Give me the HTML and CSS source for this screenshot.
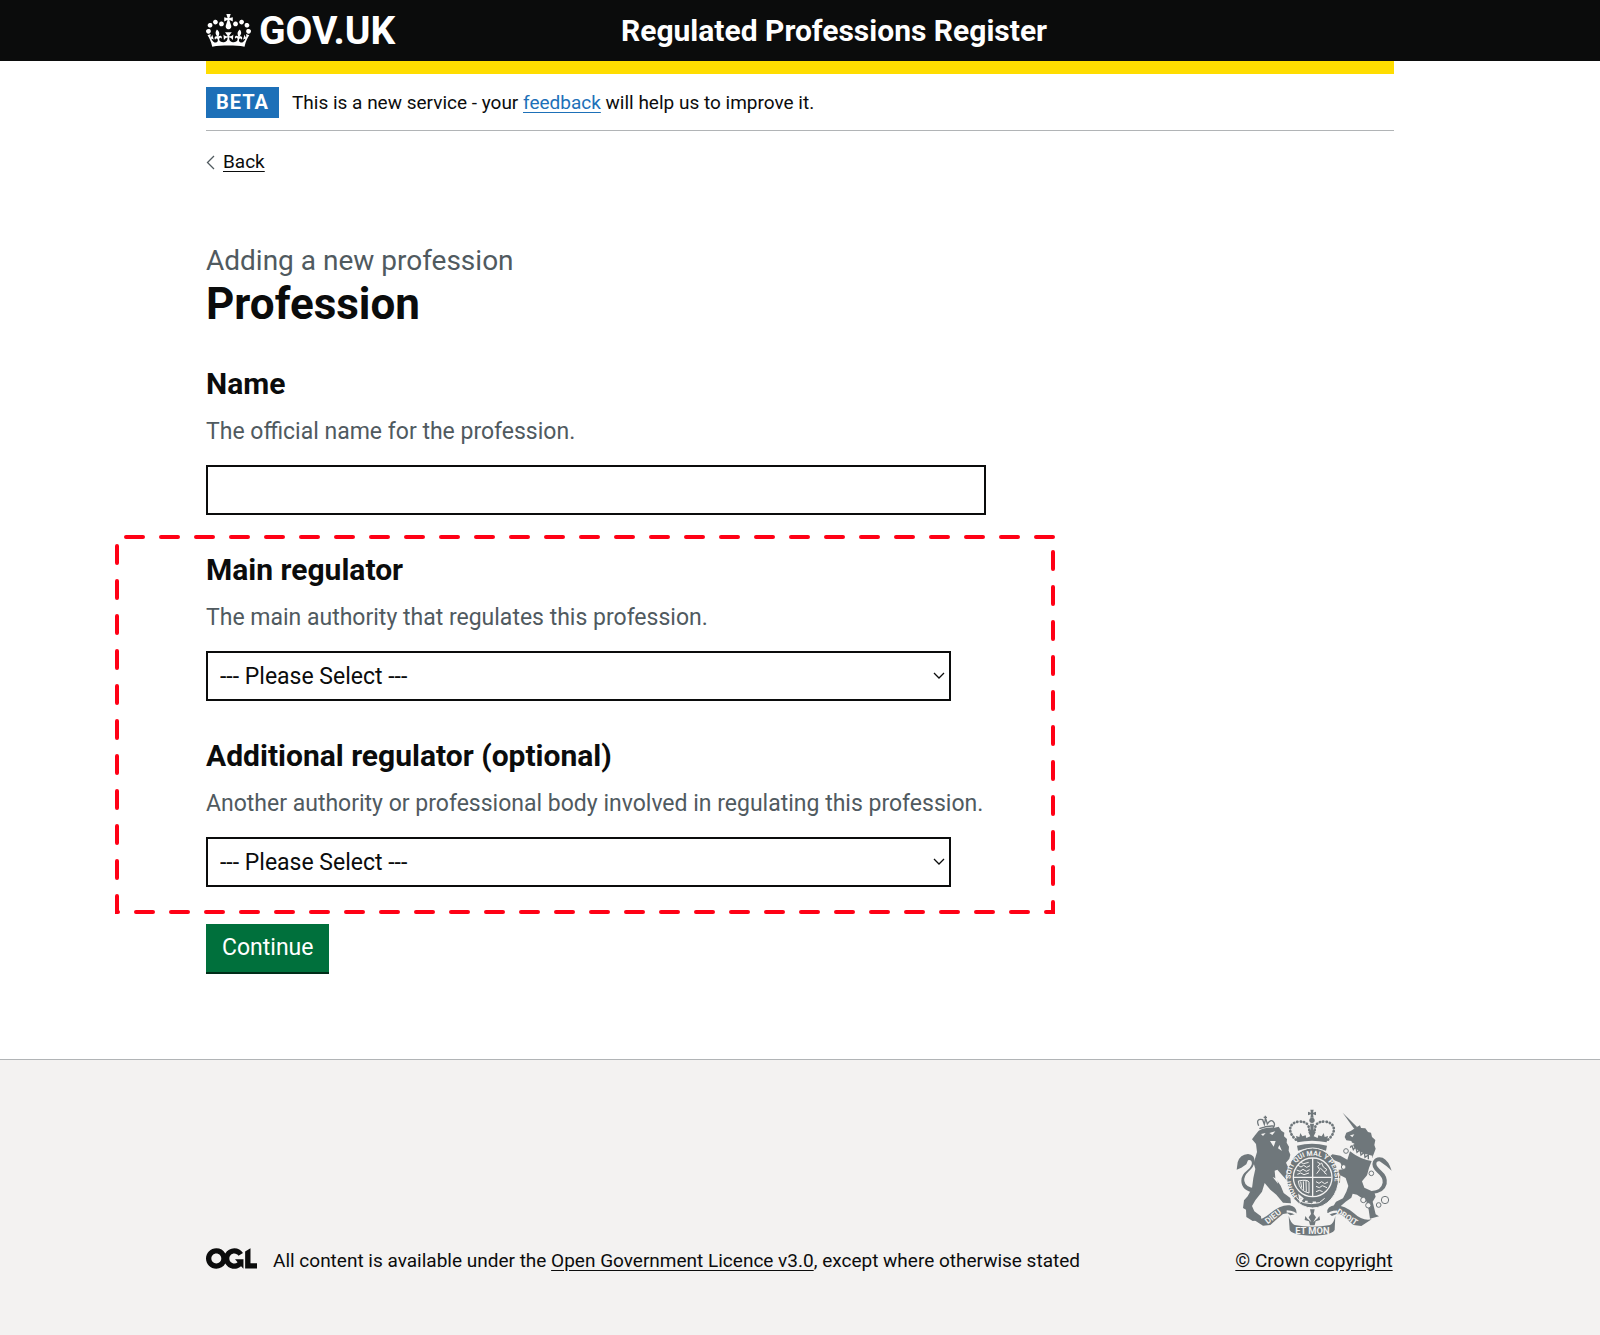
FILE: index.html
```html
<!DOCTYPE html>
<html lang="en">
<head>
<meta charset="utf-8">
<meta name="viewport" content="width=device-width, initial-scale=1">
<title>Profession - Regulated Professions Register</title>
<link rel="stylesheet" href="styles.css">
</head>
<body>
<header class="header">
  <div class="container header-inner">
    <a class="logo" href="#">
      <svg class="logo-crown" viewBox="0 0 132 97" aria-hidden="true"><path fill="currentColor" fill-rule="evenodd" d="M25 30.2c3.5 1.5 7.7-.2 9.1-3.7 1.5-3.6-.2-7.8-3.9-9.2-3.6-1.4-7.6.3-9.1 3.9-1.4 3.5.3 7.5 3.9 9zM9 39.5c3.6 1.5 7.8-.2 9.2-3.7 1.5-3.6-.2-7.8-3.9-9.1-3.6-1.5-7.6.2-9.1 3.8-1.4 3.5.3 7.5 3.8 9zM4.4 57.2c3.5 1.5 7.7-.2 9.1-3.8 1.5-3.6-.2-7.7-3.9-9.1-3.5-1.5-7.6.3-9.1 3.8-1.4 3.5.3 7.6 3.9 9.1zm38.3-21.4c3.5 1.5 7.7-.2 9.1-3.8 1.5-3.6-.2-7.7-3.9-9.1-3.6-1.5-7.6.3-9.1 3.8-1.3 3.6.4 7.7 3.9 9.1zm64.4-5.6c-3.6 1.5-7.8-.2-9.1-3.7-1.5-3.6.2-7.8 3.8-9.2 3.6-1.4 7.7.3 9.2 3.9 1.3 3.5-.4 7.5-3.9 9zm15.9 9.3c-3.6 1.5-7.7-.2-9.1-3.7-1.5-3.6.2-7.8 3.7-9.1 3.6-1.5 7.7.2 9.2 3.8 1.5 3.5-.3 7.5-3.8 9zm4.7 17.7c-3.6 1.5-7.8-.2-9.2-3.8-1.5-3.6.2-7.7 3.9-9.1 3.6-1.5 7.7.3 9.2 3.8 1.3 3.5-.4 7.6-3.9 9.1zM89.3 35.8c-3.6 1.5-7.8-.2-9.2-3.8-1.4-3.6.2-7.7 3.9-9.1 3.6-1.5 7.7.3 9.2 3.8 1.4 3.6-.3 7.7-3.9 9.1zM69.7 17.7l8.9 4.7V9.3l-8.9 2.8c-.2-.3-.5-.6-.9-.9L72.4 0H59.6l3.5 11.2c-.3.3-.6.5-.9.9l-8.8-2.8v13.1l8.8-4.7c.3.3.6.7.9.9l-5 15.4v.1c-.2.8-.4 1.6-.4 2.4 0 4.1 3.1 7.5 7 8.1h.2c.3 0 .7.1 1 .1.4 0 .7 0 1-.1h.2c4-.6 7.1-4.1 7.1-8.1 0-.8-.1-1.7-.4-2.4V34l-5.1-15.4c.4-.2.7-.6 1-.9zM66 92.8c16.9 0 32.8 1.1 47.1 3.2 4-16.9 8.9-26.7 14-33.5l-9.6-3.4c1 4.9 1.1 7.2 0 10.2-1.5-1.4-3-4.3-4.2-8.7L108.6 76c2.8-2 5-3.2 7.5-3.3-4.4 9.4-10 11.9-13.6 11.2-4.3-.8-6.3-4.6-5.6-7.9 1-4.7 5.7-5.9 8-.5 4.3-8.7-3-11.4-7.6-8.8 7.1-7.2 7.9-13.5 2.1-21.1-8 6.1-8.1 12.3-4.5 20.8-4.7-5.4-12.1-2.5-9.5 6.2 3.4-5.2 7.9-2 7.2 3.1-.6 4.3-6.4 7.8-13.5 7.2-10.3-.9-10.9-8-11.2-13.8 2.5-.5 7.1 1.8 11 7.3L80.2 60c-4.1 4.4-8 5.3-12.3 5.4 1.4-4.4 8-11.6 8-11.6H55.5s6.4 7.2 7.9 11.6c-4.2-.1-8-1-12.3-5.4l1.4 16.4c3.9-5.5 8.5-7.7 10.9-7.3-.3 5.8-.9 12.8-11.1 13.8-7.2.6-12.9-2.9-13.5-7.2-.7-5 3.8-8.3 7.1-3.1 2.7-8.7-4.6-11.6-9.4-6.2 3.7-8.5 3.6-14.7-4.6-20.8-5.8 7.6-5 13.9 2.2 21.1-4.7-2.6-11.9.1-7.7 8.8 2.3-5.5 7.1-4.2 8.1.5.7 3.3-1.3 7.1-5.7 7.9-3.5.7-9-1.8-13.5-11.2 2.5.1 4.7 1.3 7.5 3.3l-4.7-15.4c-1.2 4.4-2.7 7.2-4.3 8.7-1.1-3-.9-5.3 0-10.2l-9.5 3.4c5 6.9 9.9 16.7 14 33.5 14.8-2.1 30.8-3.2 47.7-3.2z"/></svg>
      <span>GOV.UK</span>
    </a>
    <a class="service-name" href="#">Regulated Professions Register</a>
  </div>
</header>

<div class="container">
  <div class="phase-banner">
    <strong class="tag">BETA</strong>
    <span>This is a new service - your <a class="link" href="#">feedback</a> will help us to improve it.</span>
  </div>
  <a class="back-link" href="#">
    <svg class="back-arrow" viewBox="0 0 9 15" aria-hidden="true"><path d="M8 1 1.500 7.500 8 14" fill="none" stroke="#505a5f" stroke-width="1.300"/></svg>
    <span>Back</span>
  </a>

  <main class="main">
    <h1 class="heading"><span class="caption">Adding a new profession</span>Profession</h1>
    <form class="form">
      <div class="field">
        <label class="label" for="name">Name</label>
        <p class="hint" id="name-hint">The official name for the profession.</p>
        <input class="control" id="name" type="text" aria-describedby="name-hint">
      </div>
      <div class="regulators">
        <svg class="outline" viewBox="0 0 940 379" aria-hidden="true"><path d="M938 2H2V377H938Z" fill="none" stroke="#ff0015" stroke-width="4" stroke-linecap="round" stroke-dasharray="17 18"/></svg>
        <div class="field">
          <label class="label" for="main-regulator">Main regulator</label>
          <p class="hint" id="main-hint">The main authority that regulates this profession.</p>
          <select class="control select" id="main-regulator" aria-describedby="main-hint"><option>--- Please Select ---</option></select>
        </div>
        <div class="field">
          <label class="label" for="extra-regulator">Additional regulator (optional)</label>
          <p class="hint" id="extra-hint">Another authority or professional body involved in regulating this profession.</p>
          <select class="control select" id="extra-regulator" aria-describedby="extra-hint"><option>--- Please Select ---</option></select>
        </div>
      </div>
      <button class="button" type="button">Continue</button>
    </form>
  </main>
</div>

<footer class="footer">
  <div class="container footer-inner">
    <svg class="ogl" viewBox="0 0 483.200 195.700" role="img" aria-label="Open Government Licence"><path fill="currentColor" d="M421.5 142.8V.1l-50.7 32.3v161.1h112.4v-50.7zm-122.3-9.6A47.12 47.12 0 0 1 221 97.8c0-26 21.1-47.1 47.1-47.1 16.7 0 31.4 8.7 39.7 21.8l42.7-27.2A97.63 97.63 0 0 0 268.1 0c-36.5 0-68.3 20.1-85.1 49.7A98 98 0 0 0 97.8 0C43.9 0 0 43.9 0 97.8s43.9 97.8 97.8 97.8c36.5 0 68.3-20.1 85.1-49.7a97.76 97.76 0 0 0 149.6 25.4l19.4 22.2h3v-87.8h-80l24.3 27.5zM97.8 145c-26 0-47.1-21.1-47.1-47.1s21.1-47.1 47.1-47.1 47.1 21.1 47.1 47.1S123.8 145 97.8 145"/></svg>
    <p class="licence">All content is available under the <a href="#">Open Government Licence v3.0</a>, except where otherwise stated</p>
    <div class="copyright">
      <svg class="crest" viewBox="54 42 480 384" aria-hidden="true">
        <!-- crown above the garter -->
        <g fill="none" stroke="#6f777b" stroke-width="8" stroke-dasharray="1 9" stroke-linecap="round">
          <path d="M240 134C210 108 222 82 248 80C272 78 279 90 280 106"/>
          <path d="M336 134C366 108 354 82 328 80C304 78 297 90 296 106"/>
        </g>
        <g fill="#6f777b">
          <path d="M283 44h10l-2 9 9-3v11l-9-3 2 10h-10l2-10-9 3V50l9 3z"/>
          <circle cx="288" cy="76" r="8"/>
          <path d="M282 86h12l-2 18 7 8-6 12 12 5 2-8 10 3 6-10 3 12 10-3-4 19q-44-10-88 0l-4-19 10 3 3-12 6 10 10-3 2 8 12-5-6-12 7-8z"/>
          <path d="M243 152q45-12 90 0l-3 15q-42-14-84 0z"/>
        </g>
        <!-- lion -->
        <g fill="#6f777b">
          <path d="M128 107q20-11 48-9l12-3 8 12 9 6-1 11 9 8-1 11 7 12-1 12 5 12-3 12-10 12 9 20 2 20 11 8-6 7-14-2-16-18-12-14-8 3 2 22 16 23 9 22 20 15 2 16-24-2-20-24-18-15-17-20-8 26-20 26-10 17 7 16 20 15 1 11-26 3-19-12-1-22-9-5 3-23 11-12 13-24 4-31 6-27-5-17 10-34-3-24-12-14 9-12z"/>
          <path d="M118 293q-42-5-42-36 0-17 18-31 19-16 12-28-4-4-10-2l-5 12-15 10-14 6 3-22q7-24 31-25 21 3 20 22-2 18-19 31-14 13-12 28 3 19 33 22z"/>
        </g>
        <g fill="none" stroke="#6f777b" stroke-width="4">
          <path d="M130 101q20-9 42-8M128 92q-10-22 12-18l5 14 4-18 5 17q12-18 20-4 4 8-3 16"/>
          <path d="M148 62v12M143 67h10"/>
        </g>
        <path d="M135 117l14-3-8 9zm25-3l18-5-9 11zm2 24l17 0-6 17zM170 246l14 6 2 14zM190 150l8 18-12-8z" fill="#f3f2f1"/>
        <!-- unicorn -->
        <g fill="#6f777b">
          <path d="M380 53l44 44-9 5z"/>
          <path d="M404 108l20-13 8-4 3 8 13 1 8 11 9 2 3 13 10 9-3 15 4 11-10 27-26-9-29-22-8-19-15-2-5-10 5-13z"/>
          <path d="M402 169q30 24 65 29l-8 21-6 22-15 18 7 19 30 14 4 13-9 15 9 38 10 6-27 7-4-27-7-25-28-20-13-3-4 12-17 12-18 16-21 1 10-17 21-10 10-20 6-17-8-24-16-8-1 22-10-2-2-29 5-7 17-2-9-20-20-8 4 17-10-3-7-23 9-8 24 4 21 12z"/>
          <path d="M467 288q29-2 33-25 2-15-16-30-20-17-13-34 9-17 29-11 18 9 27 39l-16-14-20-14q-10-2-10 8 1 8 15 20 20 17 16 40-7 28-45 30z"/>
        </g>
        <path d="M402 155q27 27 66 34" fill="none" stroke="#f3f2f1" stroke-width="13"/>
        <path d="M403 158l4-9 5 15 7-9 4 17 9-8 3 16 10-8 2 15 10-7v13" fill="none" stroke="#6f777b" stroke-width="4"/>
        <path d="M402 121l13-3-6 9zM396 146l14-3 6 4-12 5z" fill="#f3f2f1"/>
        <g fill="#f3f2f1" stroke="#6f777b" stroke-width="3">
          <circle cx="390" cy="168" r="7"/><circle cx="383" cy="216" r="7"/><circle cx="466" cy="235" r="7"/><circle cx="442" cy="315" r="8"/><circle cx="457" cy="331" r="8"/><circle cx="488" cy="330" r="7"/><circle cx="507" cy="315" r="11"/>
        </g>
        <!-- garter and shield -->
        <ellipse cx="290" cy="249" rx="78" ry="90" fill="#6f777b" stroke="#f3f2f1" stroke-width="3"/>
        <circle cx="290" cy="247" r="58" fill="#6f777b" stroke="#f3f2f1" stroke-width="4"/>
        <path d="M290 190v114M233 247h114" stroke="#f3f2f1" stroke-width="4"/>
        <g fill="none" stroke="#f3f2f1" stroke-width="3">
          <path d="M246 211l9 5 8-5 9 6 10-5M242 225l10 4 9-6 10 6 10-5M244 238l10-4 10 5 15-5M254 202l9 4 15-4"/>
          <path d="M300 260l9 5 8-5 9 6 10-5M300 274l10 4 9-6 14 6M300 290l10-4 10 4"/>
          <path d="M302 236l9-12-6-10 12-10 5 12 11 8-9 8 8 6M312 218l14 14M304 201l8 5"/>
          <path d="M247 258q30-6 32 4v32q-30-6-32-36zm7 2 3 18m5-19 1 27m7-28 1 32"/>
        </g>
        <path id="garter-text" d="M244 303C203 254 228 182 290 182C352 182 376 252 337 303" fill="none"/>
        <text class="garter-motto"><textPath href="#garter-text">HONI SOIT QUI MAL Y PENSE</textPath></text>
        <path d="M240 304l9 12 14 7 23 3 24-3 16-13" fill="none" stroke="#f3f2f1" stroke-width="3"/>
        <path d="M250 302l10 9-7 8zM267 320h8M290 322h10" stroke="#f3f2f1" stroke-width="5" fill="none"/>
        <!-- motto ribbon -->
        <g fill="#6f777b">
          <path d="M111 373q26 4 50-17 34-28 60-25 24 6 20 26l-18 4-8-6-14 2q-20 16-38 33l-22 2z"/>
          <path d="M467 373q-28 6-53-18-28-24-56-24-26 2-24 22l14 10 14-6 14 2q20 16 36 31l24 3z"/>
          <path d="M218 362Q224 384 236 390Q289 400 342 390Q354 384 358 362L356 405Q350 416 320 420Q289 425 258 420Q226 416 221 405Z"/>
        </g>
        <path d="M212 349q25 1 31 13M364 350q-24 0-31 13" stroke="#f3f2f1" stroke-width="7" fill="none"/>
        <g fill="#6f777b"><path d="M282 343h14l-3 13q-5 5-8 0zM289 352l11 15-8 14 12-10 6-8 2 12-13 4-3 12h-14l-3-12-13-4 2-12 6 8 12 10-8-14z"/></g>
        <text class="motto" x="289" y="417" text-anchor="middle" font-size="28">ET MON</text>
        <text class="motto" transform="translate(155 388) rotate(-38)" font-size="25">DIEU</text>
        <text class="motto" transform="translate(360 354) rotate(33)" font-size="24">DROIT</text>
      </svg>
      <a href="#">© Crown copyright</a>
    </div>
  </div>
</footer>
</body>
</html>
```
FILE: styles.css
```css
* { box-sizing: border-box; }

body {
  margin: 0;
  color: #0b0c0c;
  background: #fff;
  font-family: Roboto, "Liberation Sans", sans-serif;
  font-size: 19px;
  line-height: 24px;
}

a { color: inherit; text-underline-offset: 3px; }
p, h1 { margin: 0; }

.container { width: calc(100% - 64px); max-width: 1188px; margin: 0 auto; }

.header {
  color: #fff;
  background: linear-gradient(to top, #fff 13px, #0b0c0c 13px);
}
.header a { text-decoration: none; font-weight: 700; }
.header-inner {
  display: grid;
  grid-template-columns: 415px 1fr;
  align-items: center;
  height: 74px;
  border-bottom: 13px solid #ffdd00;
}
.logo { display: flex; align-items: center; gap: 8px; font-size: 39px; line-height: 40px; }
.logo-crown { width: 45px; height: 33px; }
.service-name { font-size: 30px; line-height: 36px; }
.phase-banner {
  display: flex;
  align-items: center;
  gap: 13px;
  padding: 13px 0 12px;
  border-bottom: 1px solid #b1b4b6;
}
.tag {
  padding: 3px 10px 4px;
  color: #fff;
  background: #1d70b8;
  font-size: 20px;
  letter-spacing: 1px;
}
.link { color: #1d70b8; }
.back-link { display: inline-flex; align-items: center; gap: 8px; margin-top: 19px; text-decoration: none; }
.back-link span { text-decoration: underline; }
.back-arrow { width: 9px; height: 15px; }

.main { padding: 67px 0 87px; }
.heading { margin-bottom: 37px; font-size: 44px; line-height: 50px; }
.caption { display: block; color: #505a5f; font-size: 28px; line-height: 36px; font-weight: 400; }
.form { max-width: 780px; }
.field { margin-bottom: 37px; }
.label { display: block; font-size: 30px; line-height: 36px; font-weight: 700; }
.hint { margin: 15px 0 18px; color: #505a5f; font-size: 23px; line-height: 30px; }
.control {
  display: block;
  width: 100%;
  height: 50px;
  padding: 6px 10px;
  border: 2px solid #0b0c0c;
  border-radius: 0;
  background: #fff;
  color: #0b0c0c;
  font: inherit;
  font-size: 23px;
}
.select {
  max-width: 745px;
  padding: 7px 24px 5px 12px;
  appearance: none;
  background: #fff url("data:image/svg+xml,%3Csvg xmlns='http://www.w3.org/2000/svg' width='12' height='8'%3E%3Cpath d='M1 1l5 5 5-5' fill='none' stroke='%230b0c0c' stroke-width='1.3'/%3E%3C/svg%3E") no-repeat right 4px center;
}

.regulators { position: relative; }
.outline { position: absolute; left: -91px; top: -17px; width: 940px; height: 379px; pointer-events: none; }

.button {
  display: block;
  height: 48px;
  padding: 0 16px;
  border: 0;
  color: #fff;
  background: #00703c;
  box-shadow: 0 2px 0 #002d18;
  font: inherit;
  font-size: 23px;
}

.footer { padding: 49px 0 63px; border-top: 1px solid #b1b4b6; background: #f3f2f1; }
.footer-inner { display: flex; align-items: flex-end; gap: 16px; }
.ogl { width: 51px; height: 21px; margin-bottom: 4px; }
.licence { flex: 1; }
.copyright { display: flex; flex-direction: column; align-items: center; gap: 12px; }
.crest { width: 160px; height: 128px; }
.motto, .garter-motto { fill: #f3f2f1; font-weight: 700; }
.garter-motto { font-size: 21px; }
```
